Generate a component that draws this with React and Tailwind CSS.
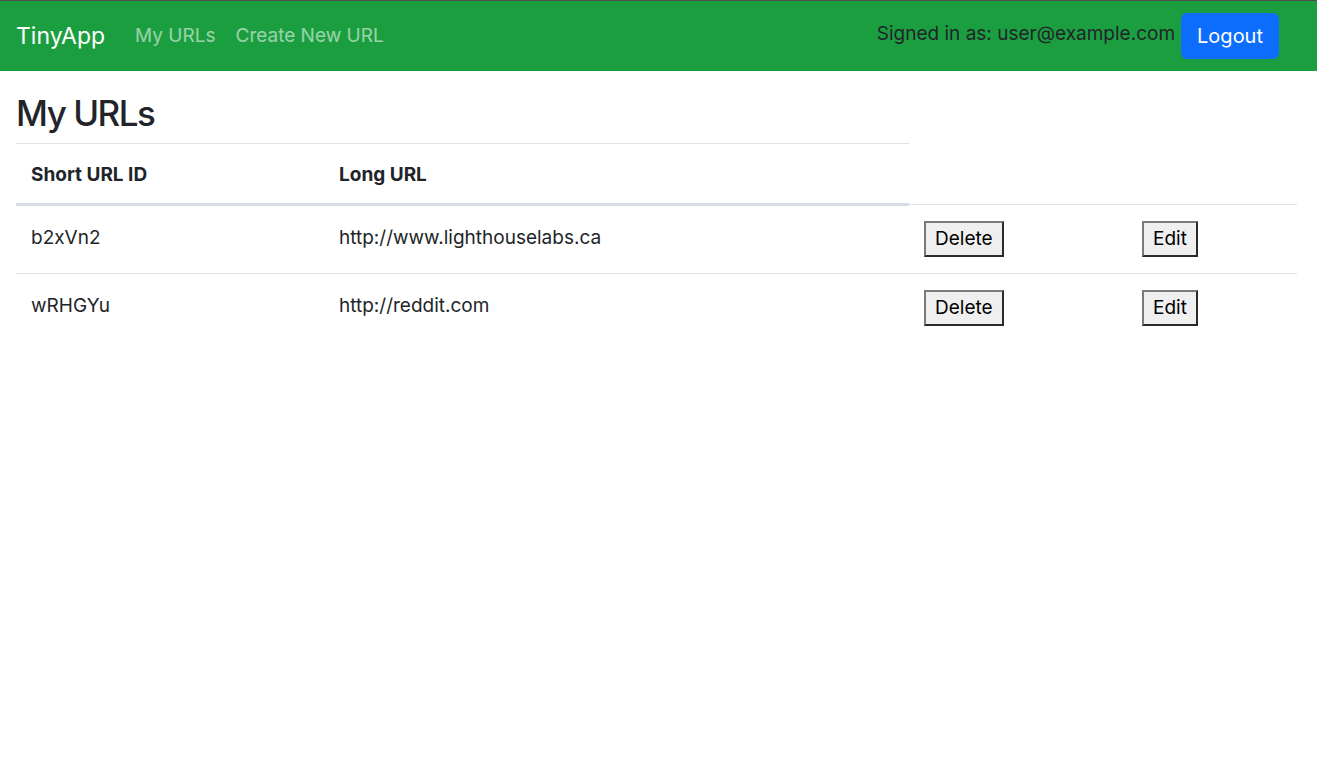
const urls = [
  { id: 'b2xVn2', long: 'http://www.lighthouselabs.ca' },
  { id: 'wRHGYu', long: 'http://reddit.com' },
];

function OldButton({ children }) {
  return (
    <button className="h-[36px] px-[9px] bg-[#efefef] border-2 border-[#7a7a7a] border-r-[#2a2a2a] border-b-[#2a2a2a] text-[19px] leading-[22px] text-black">
      {children}
    </button>
  );
}

export default function App() {
  return (
    <div className="min-h-[778px] bg-white text-[#212529] font-['Inter',Arial,sans-serif]">
      {/* Navbar */}
      <nav className="h-[71px] border-t border-[#4d4d4d] bg-[#1b9e40] flex items-center pl-4 pr-[38px]">
        <span className="text-[23px] text-white mr-[30px]">TinyApp</span>
        <div className="flex items-center gap-[20px] text-[19px] text-white/55">
          <span>My URLs</span>
          <span>Create New URL</span>
        </div>
        <div className="ml-auto flex items-center gap-[6px]">
          <span className="text-[19px] text-[#212529] -mt-[3px]">Signed in as: user@example.com</span>
          <button className="h-[46px] px-[16px] rounded-[6px] bg-[#0d6efd] text-white text-[20px]">
            Logout
          </button>
        </div>
      </nav>

      {/* Content */}
      <main className="pl-4 pr-5 pt-[21px]">
        <h2 className="text-[35px] leading-[43px] mb-[8px] font-medium tracking-[-1.5px]">My URLs</h2>
        <table className="w-full border-collapse text-[19px] leading-[27px]">
          <thead>
            <tr>
              <th className="w-[308px] text-left font-bold px-[15px] pt-[17px] pb-[15px] border-t border-[#dee2e6] border-b-[3px] border-b-[#d6dce1]">
                Short URL ID
              </th>
              <th className="w-[585px] text-left font-bold px-[15px] pt-[17px] pb-[15px] border-t border-[#dee2e6] border-b-[3px] border-b-[#d6dce1]">
                Long URL
              </th>
            </tr>
          </thead>
          <tbody>
            {urls.map((u) => (
              <tr key={u.id} className="border-t border-[#dee2e6]">
                <td className="align-top px-[15px] pt-[18px] pb-[14px]">{u.id}</td>
                <td className="align-top px-[15px] pt-[18px] pb-[14px]">{u.long}</td>
                <td className="align-top w-[218px] px-[15px] py-[16px]">
                  <OldButton>Delete</OldButton>
                </td>
                <td className="align-top px-[15px] py-[16px]">
                  <OldButton>Edit</OldButton>
                </td>
              </tr>
            ))}
          </tbody>
        </table>
      </main>
    </div>
  );
}
